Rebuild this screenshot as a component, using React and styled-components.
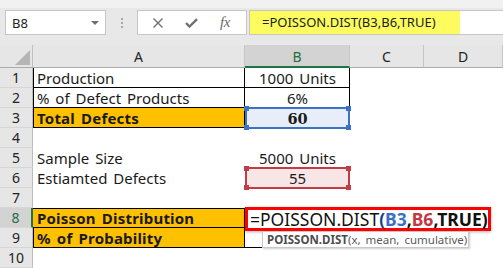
import React from 'react';
import styled, { createGlobalStyle } from 'styled-components';

const GlobalStyle = createGlobalStyle`
  html, body {
    margin: 0;
    padding: 0;
    background: #fff;
  }
  body {
    font-family: "Noto Sans", sans-serif;
    color: #1a1a1a;
  }
`;

const Window = styled.div`
  width: 503px;
  height: 268px;
  overflow: hidden;
  background: #fff;
  display: flex;
  flex-direction: column;
`;

const FormulaBar = styled.div`
  height: 45px;
  box-sizing: border-box;
  padding: 10px 0 0 5px;
  display: flex;
  align-items: flex-start;
  background: linear-gradient(#f1f1f1 0 8px, #e8e8e8 8px);
`;

const NameBox = styled.div`
  width: 101px;
  height: 25px;
  box-sizing: border-box;
  border: 1px solid #c6c6c6;
  background: #fff;
  display: flex;
  align-items: center;
  justify-content: space-between;
  padding: 0 6px 0 6px;
  font-size: 13px;
  color: #222;
`;

const DropArrow = styled.span`
  width: 0;
  height: 0;
  border-left: 4px solid transparent;
  border-right: 4px solid transparent;
  border-top: 4px solid #6f6f6f;
`;

const Grip = styled.div`
  width: 31px;
  height: 25px;
  display: flex;
  flex-direction: column;
  align-items: center;
  justify-content: center;
  gap: 2px;

  span {
    width: 2px;
    height: 2px;
    background: #a8a8a8;
  }
`;

const FxButtons = styled.div`
  width: 110px;
  height: 25px;
  box-sizing: border-box;
  border: 1px solid #c6c6c6;
  background: #fff;
  display: grid;
  grid-template-columns: 40px 26px 42px;
  align-items: center;
  justify-items: center;
  color: #707070;
`;

const FxLabel = styled.span`
  font-family: "Liberation Serif", "DejaVu Serif", serif;
  font-style: italic;
  font-size: 15px;
  color: #6a6a6a;
  letter-spacing: -0.5px;
`;

const FormulaInput = styled.div`
  flex: 1;
  height: 25px;
  margin-left: 2px;
  box-sizing: border-box;
  border: 1px solid #c6c6c6;
  border-right: none;
  background: #fff;
  display: flex;
`;

const FormulaText = styled.div`
  width: 210px;
  background: #fcfc5f;
  padding-left: 12px;
  box-sizing: border-box;
  font-size: 13px;
  line-height: 23px;
  color: #222;
`;

const Sheet = styled.div`
  display: grid;
  grid-template-columns: 33px 212px 105px 74px 79px;
  grid-template-rows: 23px repeat(10, 20px);
`;

const Corner = styled.div`
  background: #e6e6e6;
  border-right: 1px solid #c0c0c0;
  border-bottom: 1px solid #ababab;
  box-sizing: border-box;
  display: flex;
  align-items: flex-end;
  justify-content: flex-end;
  padding: 0 2px 2px 0;
`;

const ColHeader = styled.div`
  box-sizing: border-box;
  background: ${(p) => (p.$active ? '#d3d3d3' : '#e6e6e6')};
  border-right: 1px solid #c6c6c6;
  border-bottom: ${(p) => (p.$active ? '2px solid #217346' : '1px solid #ababab')};
  color: ${(p) => (p.$active ? '#1f6e43' : '#222')};
  font-size: 14px;
  display: flex;
  align-items: center;
  justify-content: center;
  padding-top: ${(p) => (p.$active ? '1px' : '0')};
`;

const RowHeader = styled.div`
  box-sizing: border-box;
  background: ${(p) => (p.$active ? '#d3d3d3' : '#e6e6e6')};
  border-right: ${(p) => (p.$active ? '2px solid #217346' : '1px solid #bdbdbd')};
  border-bottom: 1px solid #d6d6d6;
  color: ${(p) => (p.$active ? '#1f6e43' : '#222')};
  font-size: 14px;
  display: flex;
  align-items: center;
  justify-content: center;
`;

const edgeShadow = (edges = '') => {
  const parts = [];
  if (edges.includes('t')) parts.push('inset 0 1px 0 #000');
  if (edges.includes('b')) parts.push('inset 0 -1px 0 #000');
  if (edges.includes('l')) parts.push('inset 1px 0 0 #000');
  if (edges.includes('r')) parts.push('inset -1px 0 0 #000');
  return parts.length ? parts.join(', ') : 'none';
};

const Cell = styled.div`
  position: relative;
  box-sizing: border-box;
  padding: 0 4px;
  font-size: 15px;
  line-height: 20px;
  word-spacing: 2px;
  white-space: nowrap;
  text-align: ${(p) => (p.$center ? 'center' : 'left')};
  font-weight: ${(p) => (p.$bold ? 700 : 400)};
  letter-spacing: ${(p) => (p.$bold ? '0.2px' : '0')};
  background: ${(p) => p.$fill || 'transparent'};
  box-shadow: ${(p) => edgeShadow(p.$edges)};
  z-index: ${(p) => (p.$front ? 3 : 'auto')};
`;

const SerifBold = styled.span`
  font-family: "DejaVu Serif", "Liberation Serif", serif;
  font-weight: 700;
  font-size: 14.5px;
`;

const RefBox = styled.div`
  position: absolute;
  left: 0;
  top: -1px;
  right: 0;
  bottom: -1px;
  border: 2px solid ${(p) => p.$color};
  pointer-events: none;
`;

const Handle = styled.span`
  position: absolute;
  width: 5px;
  height: 5px;
  background: ${(p) => p.$color};
  left: ${(p) => (p.$x === 'l' ? '-3px' : 'auto')};
  right: ${(p) => (p.$x === 'r' ? '-3px' : 'auto')};
  top: ${(p) => (p.$y === 't' ? '-3px' : 'auto')};
  bottom: ${(p) => (p.$y === 'b' ? '-3px' : 'auto')};
`;

const EditBox = styled.div`
  position: absolute;
  left: 0;
  top: -1px;
  width: 246px;
  height: 24px;
  box-sizing: border-box;
  border: 3px solid #ff0000;
  background: #fff;
  box-shadow: 0 1px 3px rgba(0, 0, 0, 0.3);
  padding-left: 2px;
  font-size: 17.5px;
  line-height: 18px;
  color: #111;
  white-space: nowrap;
`;

const Ref = styled.span`
  font-weight: 700;
  color: ${(p) => p.$color || '#111'};
`;

const Tooltip = styled.div`
  position: absolute;
  left: 17px;
  top: 23px;
  width: 207px;
  height: 17px;
  box-sizing: border-box;
  border: 1px solid #c8c8c8;
  background: #fff;
  box-shadow: 1px 1px 2px rgba(0, 0, 0, 0.2);
  padding-left: 4px;
  font-size: 11.5px;
  line-height: 15px;
  color: #5a5a5a;
  white-space: nowrap;

  b {
    color: #4d4d4d;
  }
`;

const ORANGE = '#ffc000';
const BLUE = '#3a72c6';
const RED = '#c23b45';

function Highlight({ color }) {
  return (
    <RefBox $color={color}>
      <Handle $color={color} $x="l" $y="t" />
      <Handle $color={color} $x="r" $y="t" />
      <Handle $color={color} $x="l" $y="b" />
      <Handle $color={color} $x="r" $y="b" />
    </RefBox>
  );
}

function Row({ n, active, children }) {
  return (
    <>
      <RowHeader $active={active}>{n}</RowHeader>
      {children}
    </>
  );
}

function Empty() {
  return (
    <>
      <Cell />
      <Cell />
    </>
  );
}

export default function App() {
  return (
    <Window>
      <GlobalStyle />
      <FormulaBar>
        <NameBox>
          <span>B8</span>
          <DropArrow />
        </NameBox>
        <Grip>
          <span />
          <span />
          <span />
        </Grip>
        <FxButtons>
          <svg width="12" height="12" viewBox="0 0 12 12">
            <path d="M1.5 1.5 L10.5 10.5 M10.5 1.5 L1.5 10.5" stroke="#707070" strokeWidth="1.4" fill="none" />
          </svg>
          <svg width="13" height="10" viewBox="0 0 13 10">
            <path d="M1 5 L4.5 8.5 L12 1.2" stroke="#707070" strokeWidth="2.4" fill="none" />
          </svg>
          <FxLabel>fx</FxLabel>
        </FxButtons>
        <FormulaInput>
          <FormulaText>=POISSON.DIST(B3,B6,TRUE)</FormulaText>
        </FormulaInput>
      </FormulaBar>

      <Sheet>
        <Corner>
          <svg width="15" height="15" viewBox="0 0 15 15">
            <polygon points="15,0 15,15 0,15" fill="#b5b5b5" />
          </svg>
        </Corner>
        <ColHeader>A</ColHeader>
        <ColHeader $active>B</ColHeader>
        <ColHeader>C</ColHeader>
        <ColHeader>D</ColHeader>

        <Row n={1}>
          <Cell $edges="lrb">Production</Cell>
          <Cell $edges="rb" $center>1000 Units</Cell>
          <Empty />
        </Row>
        <Row n={2}>
          <Cell $edges="lrb">% of Defect Products</Cell>
          <Cell $edges="rb" $center>6%</Cell>
          <Empty />
        </Row>
        <Row n={3}>
          <Cell $edges="lrb" $bold $fill={ORANGE}>Total Defects</Cell>
          <Cell $center $fill="#e8eef9">
            <SerifBold>60</SerifBold>
            <Highlight color={BLUE} />
          </Cell>
          <Empty />
        </Row>
        <Row n={4}>
          <Cell />
          <Cell />
          <Empty />
        </Row>
        <Row n={5}>
          <Cell>Sample Size</Cell>
          <Cell $center>5000 Units</Cell>
          <Empty />
        </Row>
        <Row n={6}>
          <Cell>Estiamted Defects</Cell>
          <Cell $center $fill="#f8e6e6">
            55
            <Highlight color={RED} />
          </Cell>
          <Empty />
        </Row>
        <Row n={7}>
          <Cell />
          <Cell />
          <Empty />
        </Row>
        <Row n={8} active>
          <Cell $edges="trb" $bold $fill={ORANGE}>Poisson Distribution</Cell>
          <Cell $front>
            <EditBox>
              =POISSON.DIST<Ref $color="#1d3f8a">(</Ref>
              <Ref $color="#3a6fc9">B3</Ref>
              <Ref>,</Ref>
              <Ref $color="#c03a44">B6</Ref>
              <Ref>,TRUE)</Ref>
            </EditBox>
            <Tooltip>
              <b>POISSON.DIST</b>(x, mean, cumulative)
            </Tooltip>
          </Cell>
          <Empty />
        </Row>
        <Row n={9}>
          <Cell $edges="lrb" $bold $fill={ORANGE}>% of Probability</Cell>
          <Cell $edges="rb" />
          <Empty />
        </Row>
        <Row n={10}>
          <Cell />
          <Cell />
          <Empty />
        </Row>
      </Sheet>
    </Window>
  );
}
